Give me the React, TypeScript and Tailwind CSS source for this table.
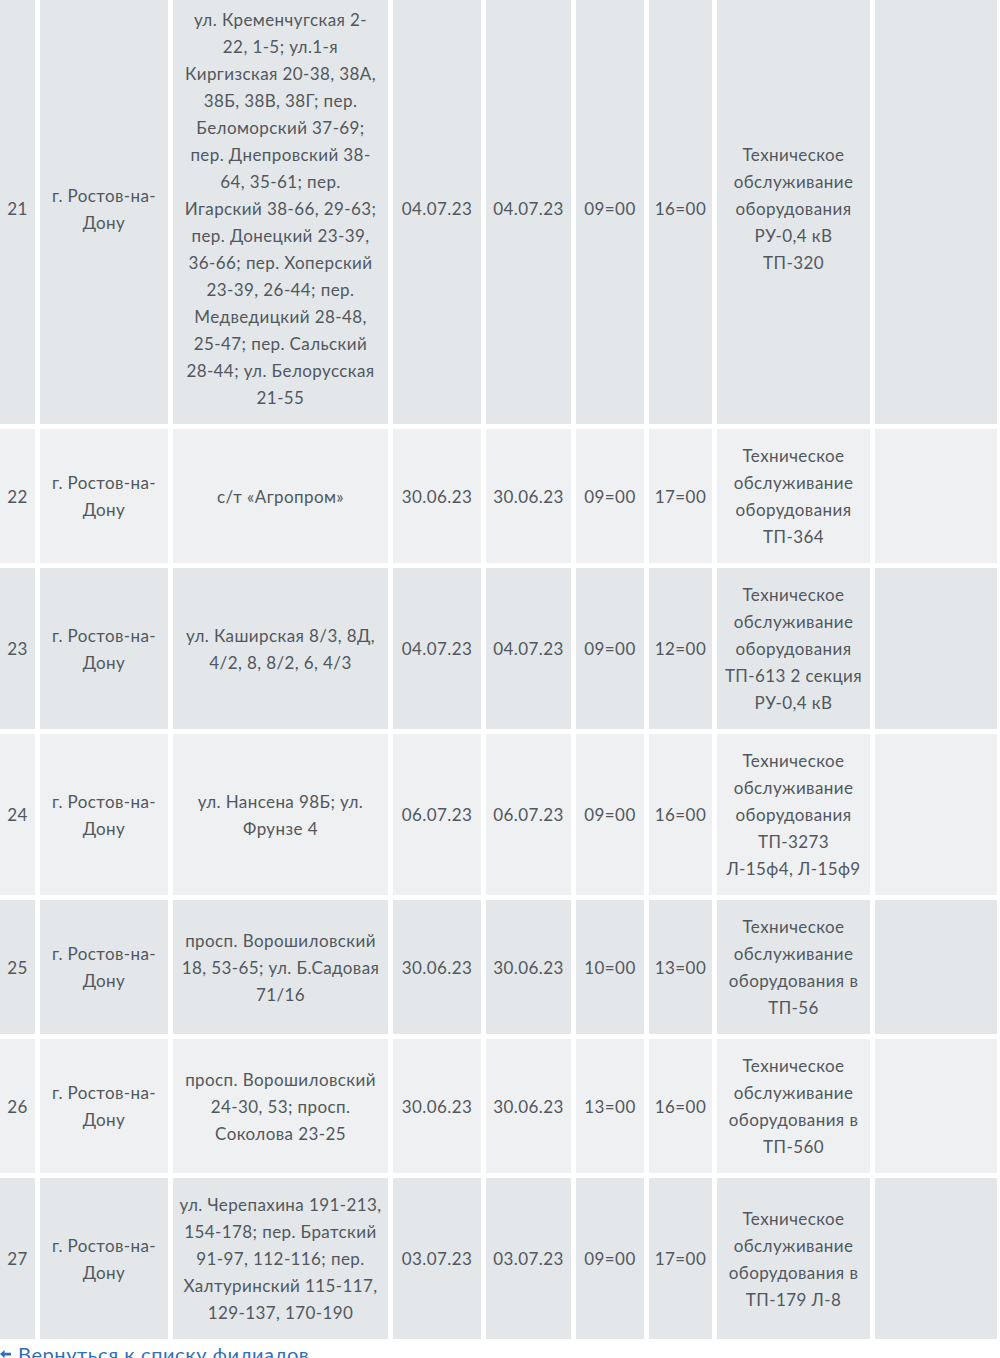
import React from "react";

type Row = {
  n: number;
  city: string[];
  address: string[];
  from: string;
  to: string;
  start: string;
  end: string;
  work: string[];
};

const city = ["г. Ростов-на-", "Дону"];
const work = (tail: string[], withV = false) => [
  "Техническое",
  "обслуживание",
  withV ? "оборудования в" : "оборудования",
  ...tail,
];

const rows: Row[] = [
  {
    n: 21,
    city,
    address: [
      "ул. Кременчугская 2-",
      "22, 1-5; ул.1-я",
      "Киргизская 20-38, 38А,",
      "38Б, 38В, 38Г; пер.",
      "Беломорский 37-69;",
      "пер. Днепровский 38-",
      "64, 35-61; пер.",
      "Игарский 38-66, 29-63;",
      "пер. Донецкий 23-39,",
      "36-66; пер. Хоперский",
      "23-39, 26-44; пер.",
      "Медведицкий 28-48,",
      "25-47; пер. Сальский",
      "28-44; ул. Белорусская",
      "21-55",
    ],
    from: "04.07.23",
    to: "04.07.23",
    start: "09=00",
    end: "16=00",
    work: work(["РУ-0,4 кВ", "ТП-320"]),
  },
  {
    n: 22,
    city,
    address: ["с/т «Агропром»"],
    from: "30.06.23",
    to: "30.06.23",
    start: "09=00",
    end: "17=00",
    work: work(["ТП-364"]),
  },
  {
    n: 23,
    city,
    address: ["ул. Каширская 8/3, 8Д,", "4/2, 8, 8/2, 6, 4/3"],
    from: "04.07.23",
    to: "04.07.23",
    start: "09=00",
    end: "12=00",
    work: work(["ТП-613 2 секция", "РУ-0,4 кВ"]),
  },
  {
    n: 24,
    city,
    address: ["ул. Нансена 98Б; ул.", "Фрунзе 4"],
    from: "06.07.23",
    to: "06.07.23",
    start: "09=00",
    end: "16=00",
    work: work(["ТП-3273", "Л-15ф4, Л-15ф9"]),
  },
  {
    n: 25,
    city,
    address: ["просп. Ворошиловский", "18, 53-65; ул. Б.Садовая", "71/16"],
    from: "30.06.23",
    to: "30.06.23",
    start: "10=00",
    end: "13=00",
    work: work(["ТП-56"], true),
  },
  {
    n: 26,
    city,
    address: ["просп. Ворошиловский", "24-30, 53; просп.", "Соколова 23-25"],
    from: "30.06.23",
    to: "30.06.23",
    start: "13=00",
    end: "16=00",
    work: work(["ТП-560"], true),
  },
  {
    n: 27,
    city,
    address: [
      "ул. Черепахина 191-213,",
      "154-178; пер. Братский",
      "91-97, 112-116; пер.",
      "Халтуринский 115-117,",
      "129-137, 170-190",
    ],
    from: "03.07.23",
    to: "03.07.23",
    start: "09=00",
    end: "17=00",
    work: work(["ТП-179 Л-8"], true),
  },
];

function Lines({ lines }: { lines: string[] }) {
  return (
    <>
      {lines.map((l, i) => (
        <div key={i} className="whitespace-nowrap">
          {l}
        </div>
      ))}
    </>
  );
}

export default function App() {
  return (
    <div className="w-[1000px] overflow-hidden bg-white font-['Lato','Open_Sans',sans-serif] text-[#52575d]">
      <table className="-ml-[5px] -mt-[12px] w-[1005px] table-fixed border-separate border-spacing-[5px] text-center text-[17px] leading-[27px] tracking-[0.4px]">
        <colgroup>
          <col className="w-[35px]" />
          <col className="w-[128px]" />
          <col className="w-[215px]" />
          <col className="w-[88px]" />
          <col className="w-[85px]" />
          <col className="w-[68px]" />
          <col className="w-[63px]" />
          <col className="w-[153px]" />
          <col className="w-[122px]" />
        </colgroup>
        <tbody>
          {rows.map((r, i) => {
            const bg = i % 2 === 0 ? "bg-[#e3e7ea]" : "bg-[#eef0f1]";
            const cell = `${bg} py-[13px] px-0 align-middle`;
            return (
              <tr key={r.n}>
                <td className={cell}>{r.n}</td>
                <td className={cell}>
                  <Lines lines={r.city} />
                </td>
                <td className={cell}>
                  <Lines lines={r.address} />
                </td>
                <td className={cell}>{r.from}</td>
                <td className={cell}>{r.to}</td>
                <td className={cell}>{r.start}</td>
                <td className={cell}>{r.end}</td>
                <td className={cell}>
                  <Lines lines={r.work} />
                </td>
                <td className={cell}></td>
              </tr>
            );
          })}
        </tbody>
      </table>
      <a
        href="#"
        className="-mt-[1px] flex items-center gap-[7px] text-[20px] leading-[22px] tracking-[0.6px] text-[#2f6fb8]"
      >
        <svg width="11" height="10" viewBox="0 0 12 10" className="shrink-0">
          <path d="M0 5 L5 0.5 V3.5 H12 V6.5 H5 V9.5 Z" fill="#2f6fb8" />
        </svg>
        Вернуться к списку филиалов
      </a>
    </div>
  );
}
